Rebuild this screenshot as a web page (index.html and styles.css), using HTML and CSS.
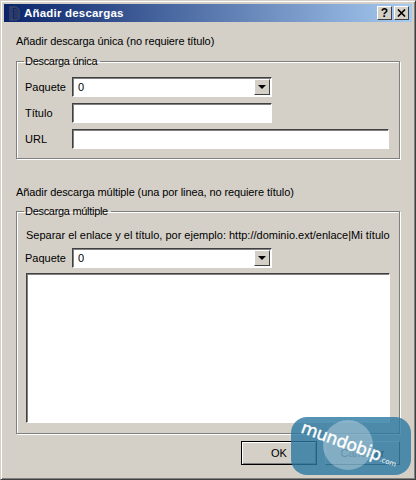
FILE: index.html
```html
<!DOCTYPE html>
<html lang="es">
<head>
    <meta charset="UTF-8">
    <meta name="viewport" content="width=device-width, initial-scale=1.0">
    <title>Añadir descargas</title>
    <link rel="stylesheet" href="styles.css">
</head>
<body>
    <div class="window">
        <div class="titlebar">
            <svg class="app-icon" width="16" height="16" viewBox="0 0 16 16">
                <path d="M3 2h6l3 3v8l-3 2H3z M5 2v13" fill="none" stroke="#3a4666" stroke-width="1.5"/>
                <path d="M8 4l2 2v6l-2 1z" fill="#1c2a58" stroke="#3a4466"/>
            </svg>
            <span class="title-text">Añadir descargas</span>
            <div class="title-buttons">
                <div class="title-btn">?</div>
                <div class="title-btn close">
                    <svg width="9" height="8" viewBox="0 0 9 8">
                        <path d="M1 0.5l7 7M8 0.5l-7 7" stroke="#000" stroke-width="1.6" fill="none"/>
                    </svg>
                </div>
            </div>
        </div>
        <div class="content">
            <div class="section-label">Añadir descarga única (no requiere título)</div>
            <fieldset class="group group-single">
                <legend>Descarga única</legend>
                <div class="form-row">
                    <label>Paquete</label>
                    <div class="combo">
                        <span class="combo-value">0</span>
                        <span class="combo-arrow"><i></i></span>
                    </div>
                </div>
                <div class="form-row">
                    <label>Título</label>
                    <input class="field field-short" type="text">
                </div>
                <div class="form-row">
                    <label>URL</label>
                    <input class="field field-wide" type="text">
                </div>
            </fieldset>
            <div class="section-label second">Añadir descarga múltiple (una por linea, no requiere título)</div>
            <fieldset class="group group-multi">
                <legend>Descarga múltiple</legend>
                <div class="hint">Separar el enlace y el título, por ejemplo: http://dominio.ext/enlace|Mi título</div>
                <div class="form-row">
                    <label>Paquete</label>
                    <div class="combo">
                        <span class="combo-value">0</span>
                        <span class="combo-arrow"><i></i></span>
                    </div>
                </div>
                <textarea class="links-box"></textarea>
            </fieldset>
            <div class="actions">
                <button class="btn btn-default">OK</button>
                <button class="btn">Cancelar</button>
            </div>
        </div>
        <div class="watermark">
            <div class="wm-circle"></div>
            <div class="wm-text">mundobip<small>.com</small></div>
        </div>
    </div>
</body>
</html>
```

FILE: styles.css
```css
* {
    box-sizing: border-box;
}

body {
    margin: 0;
    font-family: "Liberation Sans", sans-serif;
    font-size: 11px;
    color: #000;
}

.window {
    position: relative;
    width: 416px;
    height: 480px;
    overflow: hidden;
    background: #d4d0c8;
    border: 1px solid;
    border-color: #d4d0c8 #404040 #404040 #d4d0c8;
    box-shadow: inset 1px 1px 0 #fff, inset -1px -1px 0 #808080;
    padding: 3px;
}

.titlebar {
    display: flex;
    align-items: center;
    height: 18px;
    padding: 0 3px;
    background: linear-gradient(to right, #0a246a, #a6caf0);
    color: #fff;
}

.app-icon {
    flex: none;
}

.title-text {
    margin-left: 1px;
    font-size: 11.5px;
    font-weight: bold;
    letter-spacing: 0.2px;
}

.title-buttons {
    display: flex;
    gap: 2px;
    margin-left: auto;
}

.title-btn {
    display: flex;
    align-items: center;
    justify-content: center;
    width: 15px;
    height: 14px;
    background: #d4d0c8;
    border: 1px solid;
    border-color: #fff #404040 #404040 #fff;
    color: #000;
    font-size: 12px;
    font-weight: bold;
}

.content {
    display: flex;
    flex-direction: column;
    padding: 0 12px;
}

.section-label {
    height: 16px;
    margin-top: 11px;
    line-height: 16px;
    letter-spacing: -0.1px;
    white-space: nowrap;
}

.section-label.second {
    margin-top: 25px;
}

.group {
    min-width: 0;
    margin: 0;
    padding: 0 10px 0 9px;
    border: 1px solid #808080;
    box-shadow: 1px 1px 0 #fff, inset 1px 1px 0 #fff;
}

.group-single {
    height: 105px;
    margin-top: 5px;
}

.group-multi {
    height: 230px;
    margin-top: 4px;
}

.group legend {
    margin-left: -2px;
    padding: 0 3px 0 1px;
    line-height: 14px;
    height: 14px;
    letter-spacing: -0.3px;
    white-space: nowrap;
}

.form-row {
    display: flex;
    align-items: center;
    height: 20px;
    margin-bottom: 6px;
}

.group-single .form-row:first-of-type {
    margin-top: 9px;
}

.form-row label {
    width: 47px;
    margin-left: -1px;
    flex: none;
}

.combo,
.field,
.links-box {
    border: 1px solid;
    border-color: #404040 #fff #fff #404040;
    box-shadow: inset 1px 1px 0 #808080;
    background: #fff;
    outline: none;
}

.combo {
    display: flex;
    align-items: center;
    justify-content: space-between;
    width: 200px;
    height: 20px;
    padding-left: 5px;
}

.combo-arrow {
    display: flex;
    align-items: center;
    justify-content: center;
    width: 16px;
    height: 16px;
    margin-right: 1px;
    background: #d4d0c8;
    border: 1px solid;
    border-color: #fff #404040 #404040 #fff;
}

.combo-arrow i {
    width: 0;
    height: 0;
    border-style: solid;
    border-width: 4px 4px 0;
    border-color: #000 transparent transparent;
}

.field {
    height: 20px;
    padding: 0;
}

.field-short {
    width: 200px;
}

.field-wide {
    width: 317px;
}

.hint {
    height: 16px;
    margin-top: 9px;
    margin-bottom: 5px;
    line-height: 16px;
    white-space: nowrap;
}

.links-box {
    display: block;
    width: 364px;
    height: 150px;
    margin-top: -1px;
    padding: 0;
    resize: none;
}

.actions {
    display: flex;
    justify-content: flex-end;
    gap: 8px;
    margin-top: 7px;
}

.btn {
    width: 75px;
    height: 24px;
    padding: 0;
    background: #d4d0c8;
    border: 1px solid;
    border-color: #fff #404040 #404040 #fff;
    font: inherit;
    color: #000;
}

.btn-default {
    width: 76px;
    border-color: #000;
    box-shadow: inset 1px 1px 0 #fff, inset -1px -1px 0 #808080;
}

.watermark {
    position: absolute;
    left: 290px;
    top: 416px;
    width: 120px;
    height: 58px;
    border-radius: 16px;
    background: rgba(42, 120, 162, 0.8);
}

.wm-circle {
    position: absolute;
    left: 32px;
    top: 3px;
    width: 50px;
    height: 50px;
    border-radius: 50%;
    background: rgba(255, 255, 255, 0.3);
}

.wm-text {
    position: absolute;
    left: 8px;
    top: 17px;
    color: #fff;
    font-family: "DejaVu Sans", sans-serif;
    font-size: 17px;
    letter-spacing: -0.2px;
    -webkit-text-stroke: 0.4px #fff;
    white-space: nowrap;
    transform: rotate(20deg);
}

.wm-text small {
    font-size: 7px;
    letter-spacing: 0;
    -webkit-text-stroke: 0;
}
```
